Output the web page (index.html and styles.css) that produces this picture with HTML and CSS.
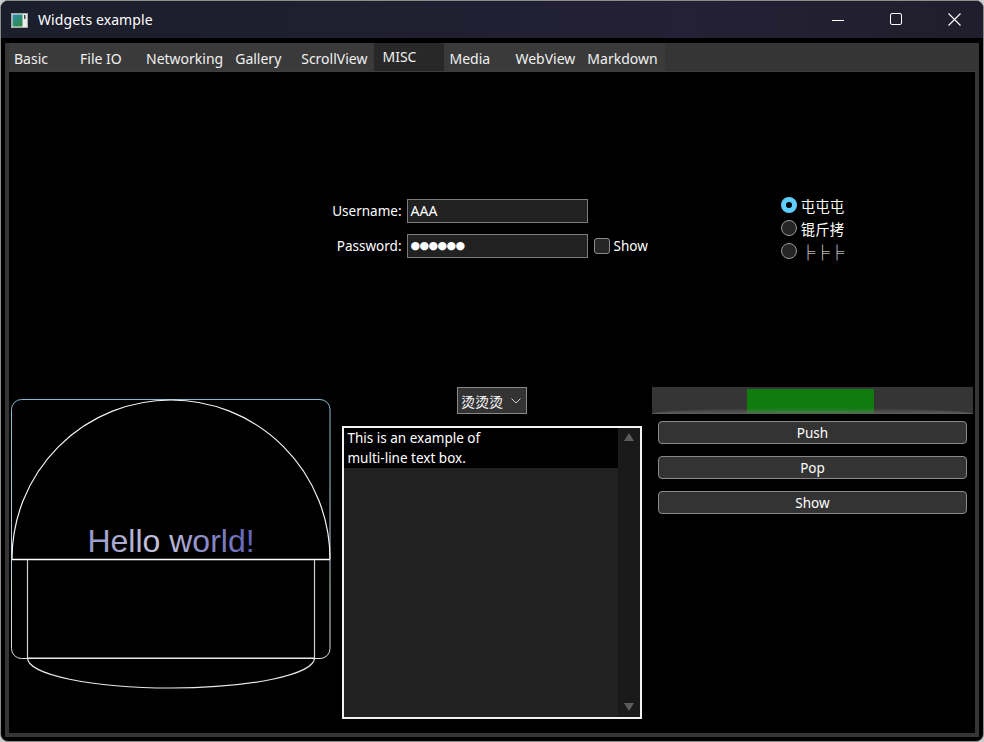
FILE: index.html
```html
<!DOCTYPE html>
<html lang="en">
<head>
<meta charset="utf-8">
<title>Widgets example</title>
<link rel="stylesheet" href="styles.css">
</head>
<body>
<div class="window">
  <header class="titlebar">
    <svg class="app-icon" width="17" height="15" viewBox="0 0 17 15">
      <defs>
        <linearGradient id="iconGrad" x1="0" y1="0" x2="0.6" y2="1">
          <stop offset="0" stop-color="#2f8fb0"/>
          <stop offset="1" stop-color="#2e8a4a"/>
        </linearGradient>
      </defs>
      <rect x="0.5" y="0.5" width="16" height="14" fill="#ececec" stroke="#a8a8a8"/>
      <rect x="1.5" y="1.5" width="10" height="12" fill="url(#iconGrad)"/>
      <rect x="13" y="2" width="1.5" height="4" fill="#4a4a4a"/>
    </svg>
    <span class="title">Widgets example</span>
    <div class="controls">
      <div class="ctl">
        <svg width="12" height="12" viewBox="0 0 12 12"><path d="M0 6.5 H12" stroke="#fff" stroke-width="1"/></svg>
      </div>
      <div class="ctl">
        <svg width="13" height="13" viewBox="0 0 13 13"><rect x="0.5" y="0.5" width="11" height="11" rx="1.5" fill="none" stroke="#fff" stroke-width="1"/></svg>
      </div>
      <div class="ctl">
        <svg width="13" height="13" viewBox="0 0 13 13"><path d="M0.5 0.5 L12.5 12.5 M12.5 0.5 L0.5 12.5" stroke="#fff" stroke-width="1.1"/></svg>
      </div>
    </div>
  </header>

  <div class="body">
    <div class="tabwidget">
      <nav class="tabbar">
        <div class="tab">Basic</div>
        <div class="tab">File IO</div>
        <div class="tab">Networking</div>
        <div class="tab">Gallery</div>
        <div class="tab">ScrollView</div>
        <div class="tab selected">MISC</div>
        <div class="tab">Media</div>
        <div class="tab">WebView</div>
        <div class="tab">Markdown</div>
      </nav>

      <main class="content">
        <section class="cell"></section>

        <section class="cell centered">
          <div class="login">
            <label class="lbl">Username:</label>
            <div class="input">AAA</div>
            <div></div>
            <label class="lbl">Password:</label>
            <div class="input"><span class="mask">●●●●●●</span></div>
            <div class="check-row">
              <span class="checkbox"></span>
              <span>Show</span>
            </div>
          </div>
        </section>

        <section class="cell centered">
          <div class="radios">
            <div class="radio-row"><span class="radio on"></span><span class="cjk">屯屯屯</span></div>
            <div class="radio-row"><span class="radio"></span><span class="cjk">锟斤拷</span></div>
            <div class="radio-row"><span class="radio"></span><span class="cjk box">╞╞╞</span></div>
          </div>
        </section>

        <section class="cell canvas-cell">
          <svg class="canvas" width="322" height="346" viewBox="9 387 322 346">
            <defs>
              <linearGradient id="frameGrad" x1="0" y1="0" x2="0" y2="1">
                <stop offset="0" stop-color="#7fbcd2"/>
                <stop offset="0.6" stop-color="#b8d0d8"/>
                <stop offset="1" stop-color="#e0e0e0"/>
              </linearGradient>
              <linearGradient id="textGrad" x1="88" y1="0" x2="253" y2="0" gradientUnits="userSpaceOnUse">
                <stop offset="0" stop-color="#9898cc"/>
                <stop offset="0.45" stop-color="#c6c6da"/>
                <stop offset="0.7" stop-color="#8e8ec8"/>
                <stop offset="1" stop-color="#6262b6"/>
              </linearGradient>
            </defs>
            <rect x="11.5" y="399.5" width="318.5" height="259" rx="10" fill="none" stroke="url(#frameGrad)" stroke-width="1"/>
            <path d="M12 559 A159 159 0 0 1 330 559" fill="none" stroke="#f4f4f4" stroke-width="1.2"/>
            <path d="M12 559.5 H330" stroke="#ffffff" stroke-width="1.6"/>
            <path d="M27.5 560 V658" stroke="#cfcfcf" stroke-width="1.2" fill="none"/>
            <path d="M314.5 560 V658" stroke="#cfcfcf" stroke-width="1.2" fill="none"/>
            <path d="M27.5 658 H314.5" stroke="#f0f0f0" stroke-width="1" fill="none"/>
            <path d="M27.5 658 A143.5 30 0 0 0 314.5 658" stroke="#e8e8e8" stroke-width="1.2" fill="none"/>
            <text x="171" y="552" text-anchor="middle" class="hello" fill="url(#textGrad)">Hello world!</text>
          </svg>
        </section>

        <section class="cell mid-bottom">
          <div class="combo">
            <span class="cjk combo-text">烫烫烫</span>
            <svg class="chev" width="10" height="6" viewBox="0 0 10 6"><path d="M0.5 0.5 L5 5 L9.5 0.5" fill="none" stroke="#cfcfcf" stroke-width="1"/></svg>
          </div>
          <div class="textbox">
            <div class="text-area">
              <div class="text-lines">This is an example of<br>multi-line text box.</div>
            </div>
            <div class="scrollbar">
              <svg width="10" height="8" viewBox="0 0 10 8"><path d="M5 0 L10 8 H0 Z" fill="#5c5c5c"/></svg>
              <svg width="10" height="8" viewBox="0 0 10 8"><path d="M0 0 H10 L5 8 Z" fill="#5c5c5c"/></svg>
            </div>
          </div>
        </section>

        <section class="cell right-bottom">
          <div class="progress">
            <div class="progress-fill"></div>
          </div>
          <button class="btn">Push</button>
          <button class="btn">Pop</button>
          <button class="btn">Show</button>
        </section>
      </main>
    </div>
  </div>
</div>
</body>
</html>
```

FILE: styles.css
```css
* { box-sizing: border-box; }

html, body {
  margin: 0;
  padding: 0;
  background: #cdcdcd;
}

body {
  font-family: "Noto Sans", "Open Sans", "Noto Sans CJK SC", sans-serif;
  font-size: 13.5px;
  color: #ffffff;
}

.window {
  width: 984px;
  height: 742px;
  border: 1px solid #8c8c8c;
  border-radius: 8px;
  background: #000;
  overflow: hidden;
  display: flex;
  flex-direction: column;
}

.titlebar {
  height: 37px;
  flex: none;
  display: flex;
  align-items: center;
  background: linear-gradient(90deg, #1b1e2b 0%, #1f1f30 40%, #242035 70%, #201e2c 100%);
}

.app-icon {
  margin-left: 10px;
  margin-top: 1px;
  flex: none;
}

.title {
  margin-left: 10px;
  font-size: 14px;
  color: #ffffff;
  letter-spacing: 0.1px;
}

.controls {
  margin-left: auto;
  display: flex;
  height: 100%;
}

.ctl {
  width: 58px;
  height: 100%;
  display: flex;
  align-items: center;
  justify-content: center;
}

.body {
  flex: 1;
  padding: 5px 4px 4px 4px;
  display: flex;
  min-height: 0;
}

.tabwidget {
  flex: 1;
  background: #353535;
  display: flex;
  flex-direction: column;
  padding: 0 4px 4px 4px;
}

.tabbar {
  height: 29px;
  flex: none;
  display: flex;
  border-bottom: 1px solid #3e3e3e;
}

.tab {
  min-width: 66px;
  padding: 3px 7px 0 5px;
  height: 28px;
  display: flex;
  align-items: center;
  background: #3a3a3a;
  color: #f0f0f0;
  font-size: 14px;
}

.tab.selected {
  background: #282828;
  min-width: 70px;
  padding: 0 7px 1px 8px;
  height: 28px;
}

.content {
  flex: 1;
  background: #000;
  display: grid;
  grid-template-columns: 322px 321px 1fr;
  grid-template-rows: 315px 1fr;
  min-height: 0;
}

.cell {
  min-width: 0;
  min-height: 0;
}

.centered {
  display: flex;
  align-items: center;
  justify-content: center;
}

/* login form */
.login {
  display: grid;
  grid-template-columns: auto 181px auto;
  grid-template-rows: 24px 24px;
  column-gap: 5px;
  row-gap: 11px;
  align-items: center;
  margin-bottom: 3px;
  margin-right: 3px;
}

.lbl {
  text-align: right;
  color: #ffffff;
}

.input {
  height: 24px;
  border: 1px solid #7c7c7c;
  background: #212121;
  padding-left: 3px;
  display: flex;
  align-items: center;
  color: #fff;
  font-size: 14px;
}

.mask {
  font-family: "DejaVu Sans", sans-serif;
  font-size: 11px;
  letter-spacing: -0.6px;
}

.check-row {
  display: flex;
  align-items: center;
  gap: 4px;
  margin-left: 1px;
}

.checkbox {
  width: 16px;
  height: 16px;
  border: 1px solid #8a8a8a;
  border-radius: 3px;
  background: #262626;
}

/* radios */
.radios {
  display: flex;
  flex-direction: column;
  margin-right: 2px;
  margin-bottom: 3px;
}

.radio-row {
  height: 23px;
  display: flex;
  align-items: center;
  gap: 4px;
}

.radio {
  width: 16px;
  height: 16px;
  border-radius: 50%;
  border: 1px solid #9a9a9a;
  background: #252525;
  flex: none;
}

.radio.on {
  border: 5px solid #60cdff;
  background: #000;
}

.cjk {
  font-family: "Noto Sans CJK SC", sans-serif;
  font-size: 14.5px;
}

.cjk.box {
  font-weight: 700;
  color: #ffffff;
}

/* canvas */
.canvas-cell {
  overflow: hidden;
}

.canvas {
  display: block;
}

.hello {
  font-family: "Liberation Sans", Arial, sans-serif;
  font-size: 32px;
}

/* middle bottom */
.mid-bottom {
  display: flex;
  flex-direction: column;
  align-items: center;
}

.combo {
  width: 70px;
  height: 27px;
  border: 1px solid #888;
  background: #333;
  display: flex;
  align-items: center;
  padding-left: 3px;
  margin-left: 1px;
}

.combo-text {
  font-size: 14px;
}

.chev {
  margin-left: 8px;
}

.textbox {
  margin-top: 12px;
  width: 300px;
  height: 293px;
  border: 2px solid #f2f2f2;
  background: #212121;
  display: flex;
}

.text-area {
  flex: 1;
}

.text-lines {
  background: #000;
  line-height: 20px;
  padding-left: 4px;
  font-size: 13.5px;
  color: #fff;
}

.scrollbar {
  width: 22px;
  background: #1a1a1a;
  display: flex;
  flex-direction: column;
  justify-content: space-between;
  align-items: center;
  padding: 5px 0 6px;
}

/* right bottom */
.right-bottom {
  display: flex;
  flex-direction: column;
  padding-right: 2px;
}

.progress {
  position: relative;
  height: 27px;
  background: #353535;
  display: flex;
  justify-content: center;
  padding-top: 2px;
}

.progress-fill {
  width: 127px;
  height: 24px;
  background: #107c10;
  margin-right: 4px;
}

.progress::after {
  content: "";
  position: absolute;
  left: 0;
  right: 0;
  bottom: 0;
  height: 6px;
  border-radius: 50% 50% 0 0 / 100% 100% 0 0;
  background: linear-gradient(to bottom, rgba(120,120,120,0) 0%, rgba(120,120,120,0.6) 100%);
}

.btn {
  margin: 7px 6px 5px 6px;
  height: 23px;
  border: 1px solid #8a8a8a;
  border-radius: 4px;
  background: #333;
  color: #fff;
  font-family: "Noto Sans", "Open Sans", sans-serif;
  font-size: 13.5px;
  padding: 0;
  line-height: 20px;
}

.btn + .btn {
  margin-top: 7px;
}
```
